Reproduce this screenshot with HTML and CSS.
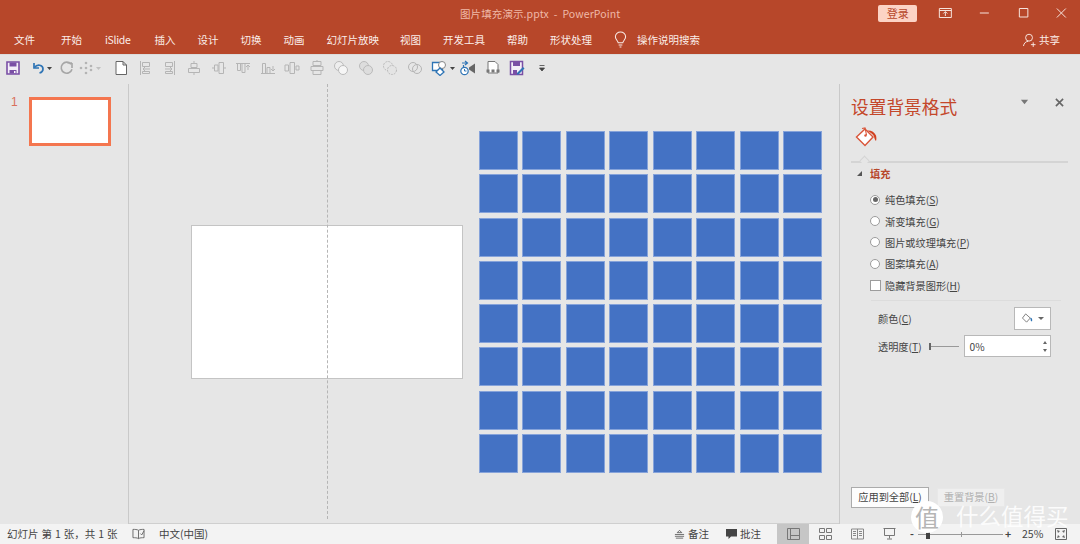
FILE: index.html
```html
<!DOCTYPE html>
<html lang="zh-CN">
<head>
<meta charset="utf-8">
<title>图片填充演示.pptx - PowerPoint</title>
<link rel="stylesheet" href="styles.css">
</head>
<body>
<div class="app">
  <header class="ribbon">
    <div class="titlebar">
      <span class="doc-title">图片填充演示.pptx &nbsp;-&nbsp; PowerPoint</span>
      <span class="login">登录</span>
      <div class="winbtns">
        <svg class="winbtn" viewBox="0 0 14 12"><path d="M1 1.500h12v9H1zM1 3.500h12M7 9V5M5 6.500l2-2 2 2" fill="none" stroke="#f6e3dc"/></svg>
        <svg class="winbtn" viewBox="0 0 14 12"><path d="M2.500 6h9" stroke="#f6e3dc" fill="none"/></svg>
        <svg class="winbtn" viewBox="0 0 14 12"><path d="M3 1.500h8.500v8.500H3z" stroke="#f6e3dc" fill="none"/></svg>
        <svg class="winbtn" viewBox="0 0 14 12"><path d="M2.500 1.500l9 9M11.500 1.500l-9 9" stroke="#f6e3dc" fill="none"/></svg>
      </div>
    </div>
    <nav class="tabs">
      <span class="tab tab-file">文件</span>
      <span class="tab">开始</span>
      <span class="tab tab-islide">iSlide</span>
      <span class="tab">插入</span>
      <span class="tab">设计</span>
      <span class="tab">切换</span>
      <span class="tab">动画</span>
      <span class="tab tab-show">幻灯片放映</span>
      <span class="tab">视图</span>
      <span class="tab">开发工具</span>
      <span class="tab">帮助</span>
      <span class="tab">形状处理</span>
      <svg class="bulb" viewBox="0 0 14 18"><path d="M4.500 12.500C4 10 1.500 9 1.500 6a5.500 5 0 0 1 11 0c0 3-2.500 4-3 6.500zM5 15h4M6 17h2" fill="none" stroke="#fbeee9" stroke-width="1.100"/></svg>
      <span class="tab tab-search">操作说明搜索</span>
      <span class="share">
        <svg class="share-icon" viewBox="0 0 14 15"><circle cx="6.500" cy="5" r="3.700" fill="none" stroke="#fbeee9"/><path d="M0.500 14c.5-3 2.500-5 5-5M8.500 12.500h5M11 10v5" fill="none" stroke="#fbeee9"/></svg>
        共享
      </span>
    </nav>
  </header>

  <div class="qat">
    <svg class="qi" viewBox="0 0 16 16"><path d="M2 2h12v12H2z" fill="#f3eef8" stroke="#7a4fa5" stroke-width="1.600"/><path d="M4.500 2.500h7v4h-7zM4.500 10h7v3.500h-7z" fill="#7a4fa5"/><path d="M9 11h1.500v2H9z" fill="#fff"/></svg>
    <svg class="qi qi-wide" viewBox="0 0 22 16"><path d="M4 3v5h5" fill="none" stroke="#2e74b5" stroke-width="1.700"/><path d="M4.500 7.500C7 4 13 4.500 13 9c0 2-1.500 3.500-3.500 4" fill="none" stroke="#2e74b5" stroke-width="1.700"/><path d="M17 7h5l-2.500 3z" fill="#444"/></svg>
    <svg class="qi qi-redo" viewBox="0 0 16 16"><path d="M13 3v5M13 3H8.500M12 4.200a5.500 5.500 0 1 0 1 5" fill="none" stroke="#a6a6a6" stroke-width="1.600"/></svg>
    <svg class="qi qi-wide2" viewBox="0 0 24 16"><g fill="#b4b4b4"><circle cx="8" cy="3" r="1.300"/><circle cx="13" cy="6" r="1.300"/><circle cx="3" cy="8" r="1.300"/><circle cx="8" cy="8" r="1.300"/><circle cx="13" cy="10" r="1.300"/><circle cx="8" cy="13" r="1.300"/></g><path d="M18 7h5l-2.500 3z" fill="#c0c0c0"/></svg>
    <svg class="qi" viewBox="0 0 16 16"><path d="M3 1.500h7l3.500 3.500v9.500H3zM10 1.500V5h3.500" fill="#fff" stroke="#666"/></svg>
    <svg class="qi" viewBox="0 0 16 16"><path d="M3.500 1v14M5.500 2.500h7v4h-7zM13 9H6M8 7L6 9l2 2M5.500 11.500h7v2h-7z" fill="none" stroke="#b5b5b5"/></svg>
    <svg class="qi" viewBox="0 0 16 16"><path d="M12.500 1v14M3.500 2.500h7v4h-7zM3 9h7M8 7l2 2-2 2M3.500 11.500h7v2h-7z" fill="none" stroke="#b5b5b5"/></svg>
    <svg class="qi" viewBox="0 0 16 16"><path d="M8 1v2M8 13v2M5 3.500h6v4H5zM2.500 8.500h11v4h-11z" fill="none" stroke="#b5b5b5"/></svg>
    <svg class="qi" viewBox="0 0 16 16"><path d="M1 8h2M13 8h2M3.500 5h3.500v6H3.500zM8 2.500h4.500v11H8z" fill="none" stroke="#b5b5b5"/></svg>
    <svg class="qi" viewBox="0 0 16 16"><path d="M1 3.500h14M2.500 3.500v7h3v-7M7 3.500v9h3v-9M13 10V5M11 7l2-2 2 2" fill="none" stroke="#b5b5b5"/></svg>
    <svg class="qi" viewBox="0 0 16 16"><path d="M1 13.500h14M2.500 13.500v-10h3v10M7 13.500v-6h3v6M13 6v5M11 9l2 2 2-2" fill="none" stroke="#b5b5b5"/></svg>
    <svg class="qi" viewBox="0 0 16 16"><path d="M1 5h3.500v6H1zM6 2.500h4.500v11H6zM12 6h3v4h-3z" fill="none" stroke="#b5b5b5"/></svg>
    <svg class="qi" viewBox="0 0 16 16"><path d="M8 0v1.500M4 1.500h8v4H4zM2 6.500h12v4H2zM4 10.500h8v4H4z" fill="none" stroke="#b5b5b5"/></svg>
    <svg class="qi" viewBox="0 0 16 16"><circle cx="6" cy="6" r="4.500" fill="#eee" stroke="#bbb"/><circle cx="10" cy="10" r="4.500" fill="#f6f6f6" stroke="#bbb"/></svg>
    <svg class="qi" viewBox="0 0 16 16"><circle cx="6" cy="6" r="4.500" fill="#ddd" stroke="#bbb"/><circle cx="10" cy="10" r="4.500" fill="#ddd" stroke="#bbb"/></svg>
    <svg class="qi" viewBox="0 0 16 16"><circle cx="6" cy="6" r="4.500" fill="none" stroke="#bbb" stroke-dasharray="2 1"/><circle cx="10" cy="10" r="4.500" fill="#e4e4e4" stroke="#bbb" stroke-dasharray="2 1"/></svg>
    <svg class="qi" viewBox="0 0 16 16"><circle cx="6" cy="7" r="4.500" fill="none" stroke="#b5b5b5"/><circle cx="10" cy="9" r="4.500" fill="none" stroke="#b5b5b5"/></svg>
    <svg class="qi qi-wide3" viewBox="0 0 24 16"><path d="M1.500 2.500h10v8h-10z" fill="#fff" stroke="#2e74b5" stroke-width="1.300"/><circle cx="11" cy="5" r="3.500" fill="#fff" stroke="#888"/><path d="M9 8l4 4-4 3.500-4-3.500z" fill="#fff" stroke="#2e74b5" stroke-width="1.300"/><path d="M19 7h5l-2.500 3z" fill="#444"/></svg>
    <svg class="qi" viewBox="0 0 16 16"><path d="M2 3h5M5 1l2.500 2L5 5M3.500 5v2" fill="none" stroke="#2e74b5" stroke-width="1.200"/><circle cx="4.500" cy="11" r="3.700" fill="#fff" stroke="#2e74b5" stroke-width="1.200"/><path d="M4.500 9v2h2" fill="none" stroke="#2e74b5"/><path d="M9 7.500l6-4v10l-6-4z" fill="#666"/></svg>
    <svg class="qi" viewBox="0 0 16 16"><path d="M3 1.500h7L13 4.500V13H3z" fill="#fff" stroke="#777"/><path d="M1.500 9.500h3v3h-3zM6.500 9.500h3v3h-3zM11.500 9.500h3v3h-3z" fill="#777"/></svg>
    <svg class="qi" viewBox="0 0 16 16"><path d="M1.500 1.500h12v13h-12z" fill="#f3eef8" stroke="#7a4fa5" stroke-width="1.500"/><path d="M4 2h7v4H4zM4 10h4v4H4z" fill="#7a4fa5"/><path d="M8 13l6-6 1.500 1.500-6 6H8z" fill="#2e74b5"/></svg>
    <svg class="qi" viewBox="0 0 16 16"><path d="M5.500 5.500h5M5.500 8h5l-2.500 3z" fill="#444" stroke="#444" stroke-width=".8"/></svg>
  </div>

  <main class="workspace">
    <aside class="thumbs">
      <span class="thumb-num">1</span>
      <div class="thumb"></div>
    </aside>

    <section class="canvas">
      <div class="slide"></div>
      <div class="guide"></div>
      <div class="tiles">
        <i></i><i></i><i></i><i></i><i></i><i></i><i></i><i></i>
        <i></i><i></i><i></i><i></i><i></i><i></i><i></i><i></i>
        <i></i><i></i><i></i><i></i><i></i><i></i><i></i><i></i>
        <i></i><i></i><i></i><i></i><i></i><i></i><i></i><i></i>
        <i></i><i></i><i></i><i></i><i></i><i></i><i></i><i></i>
        <i></i><i></i><i></i><i></i><i></i><i></i><i></i><i></i>
        <i></i><i></i><i></i><i></i><i></i><i></i><i></i><i></i>
        <i></i><i></i><i></i><i></i><i></i><i></i><i></i><i></i>
      </div>
    </section>

    <aside class="pane">
      <div class="pane-head">
        <h1 class="pane-title">设置背景格式</h1>
        <svg class="pane-caret" viewBox="0 0 10 6"><path d="M1 .5h8L5 5.500z" fill="#777"/></svg>
        <svg class="pane-close" viewBox="0 0 10 10"><path d="M1 1l8 8M9 1L1 9" stroke="#666" stroke-width="1.800" fill="none"/></svg>
      </div>
      <svg class="fill-icon" viewBox="0 0 22 20"><path d="M10 2l8 8-8 8.500L1.500 10z" fill="#fff" stroke="#d9563a" stroke-width="1.400"/><path d="M7 1.500l3-.5 1.500 7" fill="none" stroke="#d9563a" stroke-width="1.100"/><path d="M12 3.500c4-.5 7.500 1.500 9 5 .5 2 .5 4 0 5.500-1-1-1.500-2.500-2-4.500-.5-2-3.500-4-7-6z" fill="#d2401f"/><circle cx="10.500" cy="8.500" r="1.200" fill="#d9563a"/></svg>
      <div class="pane-rule"><span class="notch"></span></div>
      <div class="section-head">
        <span class="tri"></span>
        <span class="section-name">填充</span>
      </div>
      <ul class="options">
        <li class="opt"><span class="radio on"></span>纯色填充(<u>S</u>)</li>
        <li class="opt"><span class="radio"></span>渐变填充(<u>G</u>)</li>
        <li class="opt"><span class="radio"></span>图片或纹理填充(<u>P</u>)</li>
        <li class="opt"><span class="radio"></span>图案填充(<u>A</u>)</li>
        <li class="opt opt-check"><span class="check"></span>隐藏背景图形(<u>H</u>)</li>
      </ul>
      <div class="soft-rule"></div>
      <div class="field field-color">
        <span class="field-label">颜色(<u>C</u>)</span>
        <span class="color-btn">
          <svg class="color-icon" viewBox="0 0 14 12"><path d="M5 1l5 4.500-4 4.500-4.500-4.500z" fill="#fff" stroke="#777"/><path d="M10 5c2 .5 2.500 2 2 4-1 .5-1.500-.5-1.500-1.500z" fill="#2e74b5"/></svg>
          <span class="mini-caret"></span>
        </span>
      </div>
      <div class="field field-alpha">
        <span class="field-label">透明度(<u>T</u>)</span>
        <span class="slider"></span>
        <span class="spin">0%<span class="spin-arrows"><i class="up"></i><i class="down"></i></span></span>
      </div>
      <div class="pane-actions">
        <span class="btn">应用到全部(<u>L</u>)</span>
        <span class="btn btn-off">重置背景(<u>B</u>)</span>
      </div>
    </aside>
  </main>

  <footer class="status">
    <span class="st-slides">幻灯片 第 1 张，共 1 张</span>
    <svg class="st-book" viewBox="0 0 14 13"><path d="M7 2.500C5.500 1.500 3 1.500 1 1.500v9c2 0 4.500 0 6 1 1.500-1 4-1 6-1v-9c-2 0-4.500 0-6 1zM7 2.500v9M9 6l1.500 1.500L13 3" fill="none" stroke="#666"/></svg>
    <span class="st-lang">中文(中国)</span>
    <span class="st-note">
      <svg class="st-note-icon" viewBox="0 0 12 10"><path d="M6 1L3.500 3.500h5zM1 5.500h10M1 7.500h10M2 9.500h8" fill="none" stroke="#555" stroke-width=".9"/></svg>
      备注
    </span>
    <span class="st-comment">
      <svg class="st-comment-icon" viewBox="0 0 13 12"><path d="M1 1h11v7.500H6L3.500 11V8.500H1z" fill="#444"/></svg>
      批注
    </span>
    <span class="view view-on"><svg class="view-icon" viewBox="0 0 13 12"><path d="M.5.500h12v11H.5zM3.500.500v11M3.500 7.500h9" fill="none" stroke="#777"/></svg></span>
    <span class="view"><svg class="view-icon" viewBox="0 0 13 12"><path d="M.5.500h5v4h-5zM7.500.500h5v4h-5zM.5 7.500h5v4h-5zM7.500 7.500h5v4h-5z" fill="none" stroke="#777"/></svg></span>
    <span class="view"><svg class="view-icon" viewBox="0 0 13 12"><path d="M.5 1h12v10H.5zM6.500 1v10M2 3.500h3M2 5.500h3M2 7.500h3M8 3.500h3M8 5.500h3M8 7.500h3" fill="none" stroke="#888"/></svg></span>
    <span class="view"><svg class="view-icon" viewBox="0 0 13 12"><path d="M.5.500h12M1.500.500v7h10v-7M6.500 7.500v3M4 11h5" fill="none" stroke="#777"/></svg></span>
    <span class="zoom">
      <span class="zoom-minus">-</span>
      <span class="zoom-track"><i class="zoom-thumb"></i><i class="zoom-mid"></i></span>
      <span class="zoom-plus">+</span>
      <span class="zoom-val">25%</span>
      <svg class="zoom-fit" viewBox="0 0 12 12"><path d="M.5.500h11v11H.5z" fill="none" stroke="#666"/><path d="M2 2l3 1-2 2zM10 2L7 3l2 2zM2 10l3-1-2-2zM10 10L7 9l2-2z" fill="#666"/></svg>
    </span>
  </footer>

  <div class="watermark">
    <span class="wm-badge">值</span>
    <span class="wm-text">什么值得买</span>
  </div>
</div>
</body>
</html>
```

FILE: styles.css
```css
* { box-sizing: border-box; }
html, body { margin: 0; padding: 0; }
body {
  width: 1080px;
  height: 544px;
  overflow: hidden;
  font-family: "Noto Sans CJK SC", "Liberation Sans", sans-serif;
  font-size: 10.5px;
  color: #444;
  background: #e6e6e6;
}
u { text-underline-offset: 1px; }
.app { position: relative; display: flex; flex-direction: column; width: 1080px; height: 544px; }

.ribbon { height: 54px; background: #b7472a; color: #fbeee9; flex: none; }
.titlebar { height: 27px; display: flex; align-items: center; padding-bottom: 1px; }
.doc-title { margin-left: 460px; color: #efb9a8; font-size: 10.5px; letter-spacing: .1px; }
.login {
  margin-left: auto; width: 39px; height: 17px;
  background: #fcd3c5; color: #b7472a; border-radius: 2px;
  display: flex; align-items: center; justify-content: center; font-size: 11px;
}
.winbtns { display: flex; align-items: center; margin-left: 9px; margin-right: -1px; }
.winbtn { width: 38.700px; height: 12px; }

.tabs { height: 27px; display: flex; align-items: center; gap: 22px; padding: 0 20px 0 14px; margin-top: -1px; }
.tab { white-space: nowrap; }
.tab-file { margin-right: 4px; }
.tab-islide { letter-spacing: -.3px; margin: 0 2px 0 1px; }
.tab-show { margin-right: -1px; }
.bulb { width: 13px; height: 17px; flex: none; }
.tab-search { margin-left: -12px; }
.share { margin-left: auto; display: flex; align-items: center; gap: 3px; }
.share-icon { width: 13px; height: 14px; }

.qat { height: 30px; flex: none; display: flex; align-items: center; padding: 0 0 3px 5px; background: #e6e6e6; border-top: 1px solid #dcdcdc; }
.qi { width: 16px; height: 16px; flex: none; margin-right: 8.500px; }
.qi-wide { width: 22px; margin-right: 7px; }
.qi-redo { margin-right: 3px; }
.qi-wide2 { width: 24px; margin-right: 11px; }
.qi-wide3 { width: 24px; margin-right: 5px; }

.workspace { flex: 1; display: flex; min-height: 0; }
.thumbs { width: 129px; flex: none; display: flex; align-items: flex-start; padding: 13px 0 0 11px; border-right: 1px solid #c9c9c9; }
.thumb-num { width: 18px; color: #d9705a; font-size: 12px; font-family: "Liberation Sans", sans-serif; line-height: 10px; }
.thumb { width: 82px; height: 49px; background: #fff; border: 3px solid #f4764f; }

.canvas { position: relative; flex: 1; border-bottom: 1px solid #cfcfcf; }
.slide { position: absolute; left: 62px; top: 141px; width: 272px; height: 154px; background: #fff; border: 1px solid #c4c4c4; }
.guide { position: absolute; left: 198px; top: 0; bottom: 4px; border-left: 1px dashed #b5b5b5; }
.tiles {
  position: absolute; left: 350px; top: 47px; width: 343px; height: 342px;
  display: grid; grid-template-columns: repeat(8, 39px); grid-auto-rows: 39px;
  justify-content: space-between; align-content: space-between;
}
.tiles i { display: block; background: #4472c4; border: 1px solid #86a3da; }

.pane { width: 241px; flex: none; padding: 11px 12px 16px 11px; display: flex; flex-direction: column; border-left: 1px solid #c9c9c9; font-size: 10.2px; }
.pane-head { display: flex; align-items: center; height: 22px; flex: none; }
.pane-title { margin: 0; font-size: 17.700px; font-weight: 400; color: #c4472a; line-height: 22px; }
.pane-caret { width: 9px; height: 6px; margin: 0 0 8px auto; }
.pane-close { width: 9px; height: 9px; margin: 0 4px 8px 26px; }
.fill-icon { width: 22px; height: 20px; margin: 10px 0 0 4px; flex: none; display: block; }
.pane-rule { position: relative; height: 2px; margin-top: 14px; background: #d4d4d4; flex: none; width: 217px; }
.notch { position: absolute; left: 10px; top: -4px; width: 7px; height: 7px; background: #e6e6e6; border-left: 1px solid #d4d4d4; border-top: 1px solid #d4d4d4; transform: rotate(45deg); }
.section-head { display: flex; align-items: center; height: 20px; flex: none; }
.tri { width: 0; height: 0; margin-left: 6px; border-left: 5px solid transparent; border-bottom: 5px solid #555; }
.section-name { margin-left: 8px; color: #b7472a; font-weight: 700; }
.options { list-style: none; margin: 6px 0 0; padding: 0 0 0 19px; flex: none; }
.opt { height: 21.400px; display: flex; align-items: center; white-space: pre; }
.radio { position: relative; width: 10px; height: 10px; border: 1px solid #9c9c9c; border-radius: 50%; background: #fff; margin-right: 5px; flex: none; }
.radio.on::after { content: ""; position: absolute; left: 1.500px; top: 1.500px; width: 5px; height: 5px; border-radius: 50%; background: #666; }
.check { width: 11px; height: 11px; border: 1px solid #9c9c9c; background: #fff; margin-right: 4px; flex: none; }
.soft-rule { height: 1px; background: #dcdcdc; margin: 4.250px 7px 0 20px; flex: none; }
.field { display: flex; align-items: center; padding-left: 27px; flex: none; }
.field-color { margin-top: 6px; height: 23px; }
.field-alpha { margin-top: 5px; height: 22px; }
.field-label { white-space: nowrap; }
.color-btn { margin-left: auto; width: 37px; height: 23px; margin-right: 17px; background: #fff; border: 1px solid #b8b8b8; display: flex; align-items: center; justify-content: center; gap: 4px; }
.color-icon { width: 13px; height: 11px; }
.mini-caret { width: 0; height: 0; border: 3.500px solid transparent; border-top-color: #666; border-bottom-width: 0; }
.slider { position: relative; width: 30px; height: 1px; background: #999; margin-left: 7px; }
.slider::before { content: ""; position: absolute; left: 0; top: -3px; width: 2px; height: 7px; background: #666; }
.spin { margin-left: 5px; width: 87px; height: 22px; background: #fff; border: 1px solid #b8b8b8; display: flex; align-items: center; padding-left: 5px; position: relative; }
.spin-arrows { margin-left: auto; margin-right: 3px; display: flex; flex-direction: column; gap: 5px; }
.spin-arrows i { display: block; width: 0; height: 0; border-left: 2.500px solid transparent; border-right: 2.500px solid transparent; }
.spin-arrows .up { border-bottom: 3px solid #666; }
.spin-arrows .down { border-top: 3px solid #666; }
.pane-actions { margin-top: auto; display: flex; align-items: center; gap: 8px; flex: none; line-height: 1; }
.btn { height: 21px; width: 78px; background: #fdfdfd; border: 1px solid #ababab; display: flex; align-items: center; justify-content: center; white-space: pre; }
.btn-off { width: 68px; height: 19px; background: #efefef; border-color: #e8e8e8; color: #b0b0b0; }

.status { height: 20px; flex: none; display: flex; align-items: center; background: #f3f3f3; padding-left: 7px; position: relative; line-height: 1; }
.st-slides { white-space: nowrap; width: 125px; word-spacing: .6px; }
.st-book { width: 13px; height: 12px; }
.st-lang { margin-left: 14px; white-space: nowrap; }
.st-note { margin-left: auto; display: flex; align-items: center; gap: 3px; }
.st-note-icon { width: 11px; height: 10px; }
.st-comment { margin-left: 16px; display: flex; align-items: center; gap: 2px; margin-right: 16px; }
.st-comment-icon { width: 13px; height: 12px; }
.view { width: 32px; height: 20px; display: flex; align-items: center; justify-content: center; flex: none; }
.view-on { background: #c6c6c6; }
.view-icon { width: 13px; height: 12px; }
.zoom { display: flex; align-items: center; margin-left: 5px; margin-right: 13px; }
.zoom-minus { width: 8px; font-weight: 700; }
.zoom-track { position: relative; width: 85px; height: 1px; background: #999; }
.zoom-thumb { position: absolute; left: 8px; top: -4px; width: 4px; height: 9px; background: #444; }
.zoom-mid { position: absolute; left: 43px; top: -2px; width: 1px; height: 5px; background: #999; }
.zoom-plus { margin-left: 2px; width: 10px; font-weight: 700; }
.zoom-val { margin-left: 7px; width: 33px; white-space: nowrap; }
.zoom-fit { width: 12px; height: 12px; }

.watermark { position: absolute; left: 911px; top: 501px; display: flex; align-items: center; gap: 13px; }
.wm-badge {
  width: 32px; height: 32px; border-radius: 50%; background: #fff; color: #b5b5b5;
  display: flex; align-items: center; justify-content: center; font-size: 24px; line-height: 24px;
}
.wm-text { color: #fff; opacity: .88; font-size: 22.500px; white-space: nowrap; line-height: 23px; margin-top: -3px; }
```
